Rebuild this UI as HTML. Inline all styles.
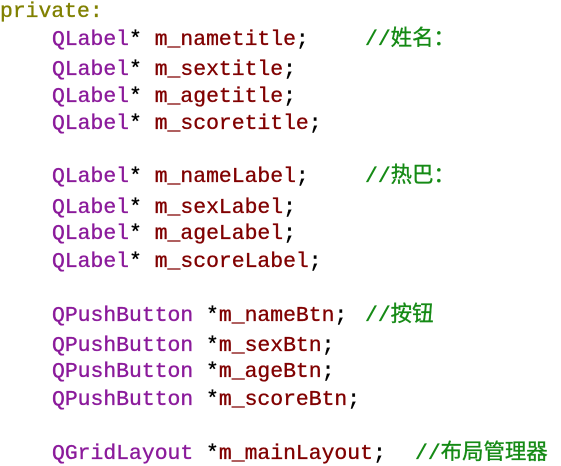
<!DOCTYPE html>
<html><head><meta charset="utf-8"><style>
html,body{margin:0;padding:0;background:#fff;width:561px;height:466px;overflow:hidden}
.l,.cm{position:absolute;font-family:"Liberation Mono","Noto Sans CJK SC",monospace;font-size:21.4px;line-height:24px;white-space:pre;color:#000;transform:translateY(-50%);-webkit-text-stroke:0.35px currentColor}
.l{left:52px}
.k{color:#808000}.t{color:#8b1a9b}.v{color:#800000}
.cm{color:#158a15}
</style></head><body>
<div class="l k" style="left:0;top:12px">private:</div>
<div class="l" style="top:40px"><span class="t">QLabel</span>* <span class="v">m_nametitle</span>;</div>
<div class="cm" style="left:365px;top:40px">//姓名：</div>
<div class="l" style="top:70px"><span class="t">QLabel</span>* <span class="v">m_sextitle</span>;</div>
<div class="l" style="top:97px"><span class="t">QLabel</span>* <span class="v">m_agetitle</span>;</div>
<div class="l" style="top:124px"><span class="t">QLabel</span>* <span class="v">m_scoretitle</span>;</div>
<div class="l" style="top:177px"><span class="t">QLabel</span>* <span class="v">m_nameLabel</span>;</div>
<div class="cm" style="left:365px;top:177px">//热巴：</div>
<div class="l" style="top:208px"><span class="t">QLabel</span>* <span class="v">m_sexLabel</span>;</div>
<div class="l" style="top:234px"><span class="t">QLabel</span>* <span class="v">m_ageLabel</span>;</div>
<div class="l" style="top:262px"><span class="t">QLabel</span>* <span class="v">m_scoreLabel</span>;</div>
<div class="l" style="top:316px"><span class="t">QPushButton</span> *<span class="v">m_nameBtn</span>;</div>
<div class="cm" style="left:365px;top:316px">//按钮</div>
<div class="l" style="top:346px"><span class="t">QPushButton</span> *<span class="v">m_sexBtn</span>;</div>
<div class="l" style="top:372px"><span class="t">QPushButton</span> *<span class="v">m_ageBtn</span>;</div>
<div class="l" style="top:400px"><span class="t">QPushButton</span> *<span class="v">m_scoreBtn</span>;</div>
<div class="l" style="top:454px"><span class="t">QGridLayout</span> *<span class="v">m_mainLayout</span>;</div>
<div class="cm" style="left:415px;top:454px">//布局管理器</div>
</body></html>
